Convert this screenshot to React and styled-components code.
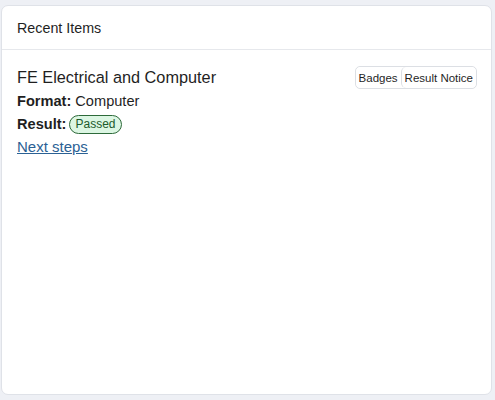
import React from "react";
import styled, { createGlobalStyle } from "styled-components";

const Global = createGlobalStyle`
  html, body {
    margin: 0;
    padding: 0;
    background: #eef0f5;
    font-family: "Liberation Sans", Arial, sans-serif;
    color: #1f1f1f;
  }
`

const Page = styled.div`
  width: 495px;
  height: 400px;
  padding: 5px 3px 5px 1px;
  box-sizing: border-box;
`

const Card = styled.div`
  height: 100%;
  box-sizing: border-box;
  background: #fff;
  border: 1px solid #dfe2e8;
  border-radius: 7px;
  display: flex;
  flex-direction: column;
`

const Header = styled.div`
  height: 44px;
  box-sizing: border-box;
  padding: 0 15px;
  display: flex;
  align-items: center;
  font-size: 14.3px;
  border-bottom: 1px solid #e6e8ec;
`

const Body = styled.div`
  padding: 17px 14px 0 15px;
`

const Row = styled.div`
  display: flex;
  justify-content: space-between;
  align-items: flex-start;
`

const Title = styled.div`
  font-size: 16.3px;
  line-height: 21px;
  margin-bottom: 2px;
`

const Group = styled.div`
  display: flex;
  border: 1px solid #dcdfe4;
  border-radius: 5px;
  margin-top: -1px;
`

const GroupBtn = styled.button`
  font-family: inherit;
  font-size: 11.5px;
  color: #1f1f1f;
  background: #fff;
  border: none;
  border-left: ${(p) => (p.first ? "none" : "1px solid #dcdfe4")};
  border-radius: 5px;
  padding: 0 3px;
  height: 21px;
`

const Line = styled.div`
  font-size: 14.6px;
  line-height: 23px;
  display: flex;
  align-items: center;
  gap: 4px;
`

const Label = styled.b`
  font-weight: bold;
`

const Badge = styled.span`
  font-size: 12px;
  color: #1d5a2c;
  background: #dcf6e3;
  border: 1px solid #2d6a3a;
  border-radius: 10px;
  padding: 1px 5px;
  line-height: 15px;
  margin-left: -1px;
`

const Link = styled.a`
  display: block;
  font-size: 15px;
  line-height: 21px;
  color: #2b6194;
  text-decoration: underline;
`

const App = () => {
  return (
    <Page>
      <Global />
      <Card>
        <Header>Recent Items</Header>
        <Body>
          <Row>
            <Title>FE Electrical and Computer</Title>
            <Group>
              <GroupBtn first>Badges</GroupBtn>
              <GroupBtn>Result Notice</GroupBtn>
            </Group>
          </Row>
          <Line>
            <Label>Format:</Label> Computer
          </Line>
          <Line>
            <Label>Result:</Label>
            <Badge>Passed</Badge>
          </Line>
          <Link href="#">Next steps</Link>
        </Body>
      </Card>
    </Page>
  );
}

export default App;
